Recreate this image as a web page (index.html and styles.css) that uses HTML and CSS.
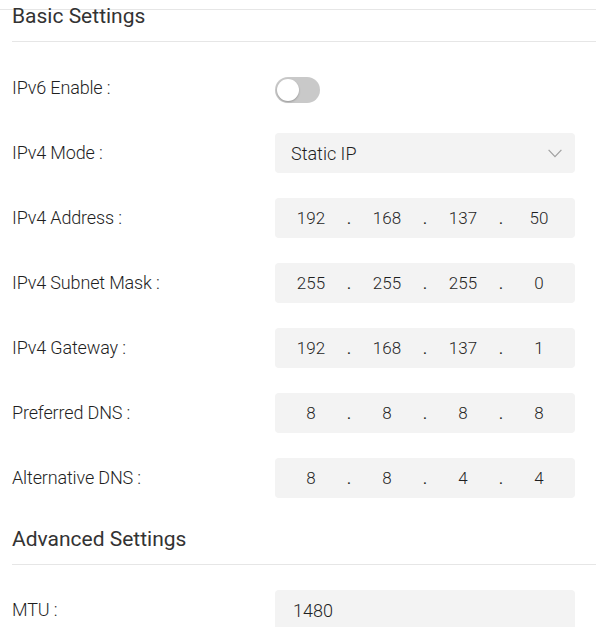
FILE: index.html
```html
<!DOCTYPE html>
<html lang="en">
<head>
<meta charset="utf-8">
<title>Settings</title>
<link rel="stylesheet" href="styles.css">
</head>
<body>
<div class="topline"></div>
<div class="page">
  <h2 class="section-title">Basic Settings</h2>
  <div class="rows">
    <div class="row">
      <div class="label">IPv6 Enable :</div>
      <div class="control"><span class="toggle"><span class="knob"></span></span></div>
    </div>
    <div class="row">
      <div class="label">IPv4 Mode :</div>
      <div class="control">
        <div class="select"><span>Static IP</span>
          <svg class="chev" width="14" height="9" viewBox="0 0 14 9"><path d="M0.6 0.8 L7 7.6 L13.4 0.8" fill="none" stroke="#a0a0a0" stroke-width="1.2"/></svg>
        </div>
      </div>
    </div>
    <div class="row">
      <div class="label">IPv4 Address :</div>
      <div class="control"><div class="ip"><span class="seg">192</span><span class="dot">.</span><span class="seg">168</span><span class="dot">.</span><span class="seg">137</span><span class="dot">.</span><span class="seg">50</span></div></div>
    </div>
    <div class="row">
      <div class="label">IPv4 Subnet Mask :</div>
      <div class="control"><div class="ip"><span class="seg">255</span><span class="dot">.</span><span class="seg">255</span><span class="dot">.</span><span class="seg">255</span><span class="dot">.</span><span class="seg">0</span></div></div>
    </div>
    <div class="row">
      <div class="label">IPv4 Gateway :</div>
      <div class="control"><div class="ip"><span class="seg">192</span><span class="dot">.</span><span class="seg">168</span><span class="dot">.</span><span class="seg">137</span><span class="dot">.</span><span class="seg">1</span></div></div>
    </div>
    <div class="row">
      <div class="label">Preferred DNS :</div>
      <div class="control"><div class="ip"><span class="seg">8</span><span class="dot">.</span><span class="seg">8</span><span class="dot">.</span><span class="seg">8</span><span class="dot">.</span><span class="seg">8</span></div></div>
    </div>
    <div class="row">
      <div class="label">Alternative DNS :</div>
      <div class="control"><div class="ip"><span class="seg">8</span><span class="dot">.</span><span class="seg">8</span><span class="dot">.</span><span class="seg">4</span><span class="dot">.</span><span class="seg">4</span></div></div>
    </div>
  </div>
  <h2 class="section-title second">Advanced Settings</h2>
  <div class="rows rows-adv">
    <div class="row">
      <div class="label">MTU :</div>
      <div class="control"><div class="text-input">1480</div></div>
    </div>
  </div>
</div>
</body>
</html>
```

FILE: styles.css
```css
html, body {
  margin: 0;
  padding: 0;
  background: #ffffff;
}
body {
  font-family: Roboto, "Liberation Sans", sans-serif;
  color: #1f1f1f;
  width: 596px;
  height: 627px;
  overflow: hidden;
}
.topline {
  height: 9px;
  border-bottom: 1px solid #e6e6e6;
}
.page {
  padding-left: 12px;
}
.section-title {
  margin: 0;
  font-size: 21px;
  font-weight: 400;
  line-height: 12px;
  padding-bottom: 19px;
  border-bottom: 1px solid #e6e6e6;
  color: #333333;
}
.section-title.second {
  margin-top: 35px;
}
.rows {
  display: flex;
  flex-direction: column;
  gap: 25px;
  margin-top: 26px;
}
.rows-adv {
  margin-top: 25px;
}
.row {
  display: grid;
  grid-template-columns: 263px 300px;
  align-items: center;
  height: 40px;
}
.label {
  font-size: 18px;
  font-weight: 300;
  line-height: 40px;
  letter-spacing: -0.15px;
  white-space: nowrap;
}
.control {
  display: flex;
  align-items: center;
  height: 40px;
}
.toggle {
  display: block;
  width: 45px;
  height: 26px;
  border-radius: 13px;
  background: #c9c9c9;
  position: relative;
  margin-top: 3px;
}
.knob {
  position: absolute;
  left: 2px;
  top: 2px;
  width: 22px;
  height: 22px;
  border-radius: 50%;
  background: #ffffff;
  box-shadow: 0 1px 2px rgba(0, 0, 0, 0.25);
}
.select, .ip, .text-input {
  box-sizing: border-box;
  width: 300px;
  height: 40px;
  background: #f3f3f3;
  border-radius: 4px;
  font-size: 18px;
  font-weight: 300;
  color: #1f1f1f;
}
.select {
  display: flex;
  align-items: center;
  justify-content: space-between;
  padding: 0 13px 0 16px;
}
.chev {
  display: block;
  margin-top: 1px;
}
.ip {
  display: flex;
  align-items: center;
  padding: 0 6px;
  font-size: 17px;
}
.seg {
  width: 60px;
  text-align: center;
}
.dot {
  width: 16px;
  text-align: center;
  font-weight: 400;
}
.text-input {
  display: flex;
  align-items: center;
  padding-left: 18px;
}
```
